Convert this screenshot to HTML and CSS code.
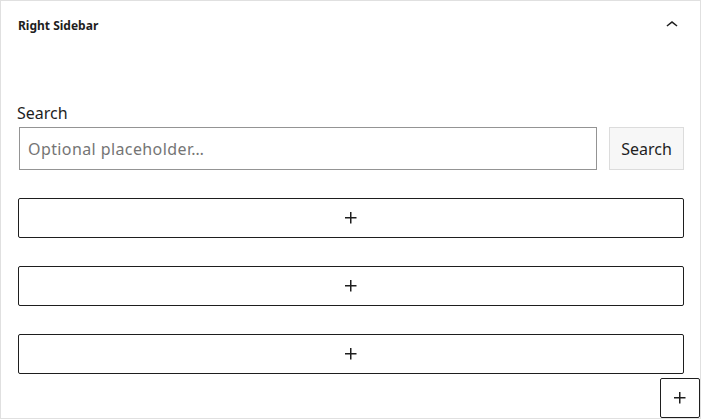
FILE: index.html
```html
<!DOCTYPE html>
<html>
<head>
<meta charset="utf-8">
<link rel="stylesheet" href="styles.css">
</head>
<body>
<div class="panel">
  <div class="header">
    <span class="title">Right Sidebar</span>
    <svg class="chev" width="24" height="24" viewBox="0 0 24 24"><path d="M6.5 12.4L12 8l5.5 4.4-.9 1.2L12 10l-4.6 3.6-1-1.2z" fill="#1e1e1e"/></svg>
  </div>
  <div class="content">
    <div class="search">
      <label class="label">Search</label>
      <div class="row">
        <div class="input">Optional placeholder…</div>
        <div class="btn">Search</div>
      </div>
    </div>
    <div class="appender"><svg width="24" height="24" viewBox="0 0 24 24"><path d="M11 12.5V17.5H12.5V12.5H17.5V11H12.5V6H11V11H6V12.5H11Z" fill="#1e1e1e"/></svg></div>
    <div class="appender"><svg width="24" height="24" viewBox="0 0 24 24"><path d="M11 12.5V17.5H12.5V12.5H17.5V11H12.5V6H11V11H6V12.5H11Z" fill="#1e1e1e"/></svg></div>
    <div class="appender"><svg width="24" height="24" viewBox="0 0 24 24"><path d="M11 12.5V17.5H12.5V12.5H17.5V11H12.5V6H11V11H6V12.5H11Z" fill="#1e1e1e"/></svg></div>
  </div>
  <div class="add"><svg width="24" height="24" viewBox="0 0 24 24"><path d="M11 12.5V17.5H12.5V12.5H17.5V11H12.5V6H11V11H6V12.5H11Z" fill="#1e1e1e"/></svg></div>
</div>
</body>
</html>
```
FILE: styles.css
```css
html, body { margin: 0; padding: 0; background: #fff; }
body { font-family: "Noto Sans", "Open Sans", sans-serif; color: #1e1e1e; }
.panel {
  position: relative;
  box-sizing: border-box;
  width: 701px;
  height: 419px;
  border: 1px solid #e0e0e0;
}
.header {
  height: 48px;
  display: flex;
  align-items: center;
  justify-content: space-between;
  padding: 0 17px 0 17px;
}
.title { font-size: 12px; font-weight: 700; }
.chev { margin-right: -1px; margin-top: -1px; }
.content {
  padding: 52px 16px 0 17px;
  display: flex;
  flex-direction: column;
}
.label { display: block; font-size: 16px; line-height: 24px; margin-left: -1px; }
.row { display: flex; margin-top: 2px; gap: 12px; }
.input {
  flex: 1;
  margin-left: 1px;
  height: 43px;
  box-sizing: border-box;
  border: 1px solid #949494;
  padding: 0 8px;
  display: flex;
  align-items: center;
  font-size: 16px;
  letter-spacing: 0.4px;
  color: #757575;
}
.btn {
  width: 75px;
  height: 43px;
  box-sizing: border-box;
  border: 1px solid #dcdcdc;
  background: #f7f7f7;
  display: flex;
  align-items: center;
  justify-content: center;
  font-size: 16px;
}
.appender {
  margin-top: 28px;
  height: 40px;
  box-sizing: border-box;
  border: 1px solid #1e1e1e;
  border-radius: 2px;
  display: flex;
  align-items: center;
  justify-content: center;
}
.add {
  position: absolute;
  right: 0;
  bottom: 0;
  width: 40px;
  height: 40px;
  box-sizing: border-box;
  border: 1px solid #1e1e1e;
  border-radius: 2px;
  background: #fff;
  display: flex;
  align-items: center;
  justify-content: center;
}
```
